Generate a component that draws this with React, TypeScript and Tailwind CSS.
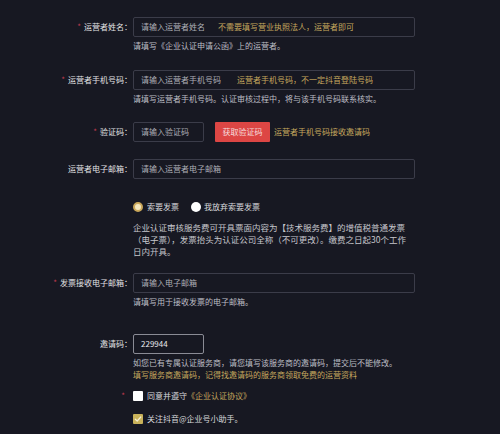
import type { ReactNode } from 'react'

const font = { fontFamily: '"Noto Sans CJK SC", "Noto Sans", sans-serif' }

function Label({ text, required }: { text: string; required?: boolean }) {
  return (
    <div className="w-[133px] shrink-0 h-[20px] pr-[1px] flex items-center justify-end text-[8px] text-[#e2e2e4]">
      {required && <span className="mr-[3px] text-[#c23a4f]">*</span>}
      <span>{text}：</span>
    </div>
  )
}

function Row({ label, required, children, className = '' }: { label: string; required?: boolean; children: ReactNode; className?: string }) {
  return (
    <div className={'flex items-start ' + className}>
      <Label text={label} required={required} />
      <div className="flex flex-col flex-1 min-w-0">{children}</div>
    </div>
  )
}

const box = 'h-[20px] border border-[#3b3c49] rounded-[2px] flex items-center pl-[7px] text-[8px] text-[#adaeb6]'
const help = 'mt-[3px] leading-[12px] text-[8px] text-[#bdbec5]'

export default function App() {
  return (
    <div className="w-[500px] h-[434px] overflow-hidden bg-[#171822]" style={font}>
      <div className="flex flex-col pt-[17px]">
        <Row label="运营者姓名" required>
          <div className={box + ' w-[282px]'}>
            <span>请输入运营者姓名</span>
            <span className="ml-[13px] text-[#c6a85e]">不需要填写营业执照法人，运营者即可</span>
          </div>
          <p className={help}>请填写《企业认证申请公函》上的运营者。</p>
        </Row>

        <Row label="运营者手机号码" required className="mt-[18px]">
          <div className={box + ' w-[282px]'}>
            <span>请输入运营者手机号码</span>
            <span className="ml-[16px] text-[#c6a85e]">运营者手机号码，不一定抖音登陆号码</span>
          </div>
          <p className={help}>请填写运营者手机号码。认证审核过程中，将与该手机号码联系核实。</p>
        </Row>

        <Row label="验证码" required className="mt-[17px]">
          <div className="flex items-center">
            <div className={box + ' w-[71px]'}>请输入验证码</div>
            <button className="ml-[11px] w-[55px] h-[20px] bg-[#dd4644] text-[8px] text-[#f6dcdc] rounded-[1px]">获取验证码</button>
            <span className="ml-[4px] text-[8px] text-[#c6a85e]">运营者手机号码接收邀请码</span>
          </div>
        </Row>

        <Row label="运营者电子邮箱" className="mt-[17px]">
          <div className={box + ' w-[282px]'}>请输入运营者电子邮箱</div>
        </Row>

        <div className="mt-[22px] ml-[133px] flex items-center h-[12px] text-[8px] text-[#d8d8dc]">
          <span className="w-[10px] h-[10px] rounded-full bg-[#f4e6bd] border-[2px] border-[#c9a659]" />
          <span className="ml-[4px]">索要发票</span>
          <span className="ml-[12px] w-[10px] h-[10px] rounded-full bg-white" />
          <span className="ml-[3px]">我放弃索要发票</span>
        </div>

        <p className="mt-[8px] ml-[133px] w-[290px] leading-[12px] text-[8.5px] text-[#c6c6cc]">
          企业认证审核服务费可开具票面内容为【技术服务费】的增值税普通发票
          <br />
          （电子票），发票抬头为认证公司全称（不可更改）。缴费之日起30个工作
          <br />
          日内开具。
        </p>

        <Row label="发票接收电子邮箱" required className="mt-[16px]">
          <div className={box + ' w-[282px]'}>请输入电子邮箱</div>
          <p className={help}>请填写用于接收发票的电子邮箱。</p>
        </Row>

        <Row label="邀请码" className="mt-[26px]">
          <div className={box + ' w-[71px] border-[#8a8b95] text-[#e8e8ec]'}>229944</div>
          <p className={help}>如您已有专属认证服务商，请您填写该服务商的邀请码，提交后不能修改。</p>
          <p className="leading-[12px] text-[8px] text-[#c6a85e]">填写服务商邀请码，记得找邀请码的服务商领取免费的运营资料</p>
        </Row>

        <div className="mt-[9px] flex items-center h-[12px] text-[8px] text-[#d8d8dc]">
          <span className="w-[133px] pr-[8px] text-right text-[#c23a4f]">*</span>
          <span className="w-[10px] h-[10px] bg-white rounded-[1px]" />
          <span className="ml-[4px]">同意并遵守</span>
          <span className="text-[#c6a85e]">《企业认证协议》</span>
        </div>

        <div className="mt-[11px] ml-[133px] flex items-center h-[12px] text-[8px] text-[#d8d8dc]">
          <span className="w-[10px] h-[10px] bg-[#c9b25a] rounded-[1px] flex items-center justify-center">
            <svg width="8" height="8" viewBox="0 0 8 8" fill="none">
              <path d="M1.3 4.2L3.2 6L6.8 2" stroke="#f5efd2" strokeWidth="1.2" strokeLinecap="round" strokeLinejoin="round" />
            </svg>
          </span>
          <span className="ml-[4px]">关注抖音@企业号小助手。</span>
        </div>
      </div>
    </div>
  )
}
